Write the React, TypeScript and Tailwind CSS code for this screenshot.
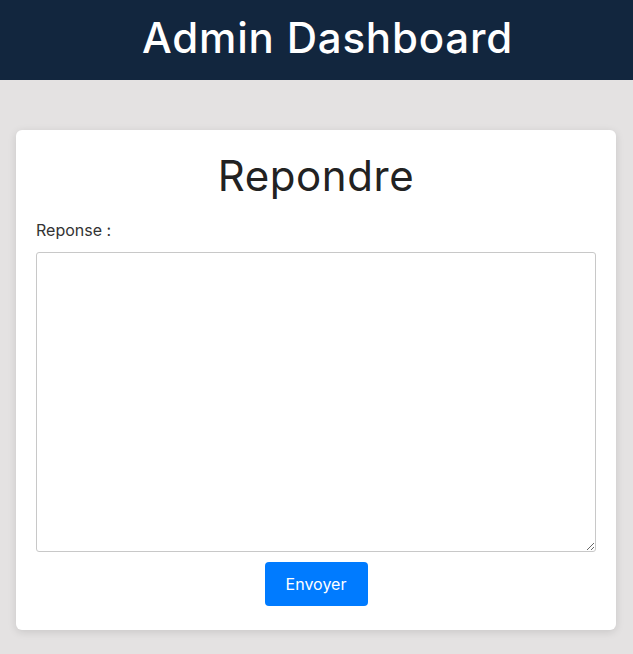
export default function App() {
  return (
    <div
      className="min-h-[654px] bg-[#e4e2e2] text-[#222]"
      style={{ fontFamily: "Inter, 'Noto Sans', sans-serif" }}
    >
      {/* Top bar */}
      <header className="h-[80px] bg-[#12263e] flex items-center justify-center pl-[22px] pb-[6px]">
        <h1 className="text-[42px] font-medium text-white tracking-[0.8px]">Admin Dashboard</h1>
      </header>

      {/* Reply card */}
      <main className="pl-4 pt-[50px] pb-6">
        <div className="w-[600px] bg-white rounded-md shadow-[0_2px_8px_rgba(0,0,0,0.12)] px-5 pt-[18px] pb-6">
          <h2 className="text-center text-[42px] leading-[56px] text-[#222] tracking-[0.6px]">Repondre</h2>
          <form className="mt-[14px] flex flex-col" onSubmit={(e) => e.preventDefault()}>
            <label htmlFor="reponse" className="text-[16px] text-[#333] mb-[10px]">
              Reponse :
            </label>
            <textarea
              id="reponse"
              className="h-[300px] w-full border border-[#c8c8c8] rounded-[3px] p-2 outline-none"
            />
            <button
              type="submit"
              className="self-center mt-[10px] w-[103px] h-[44px] bg-[#007bff] text-white text-[16px] rounded-[4px]"
            >
              Envoyer
            </button>
          </form>
        </div>
      </main>
    </div>
  )
}
